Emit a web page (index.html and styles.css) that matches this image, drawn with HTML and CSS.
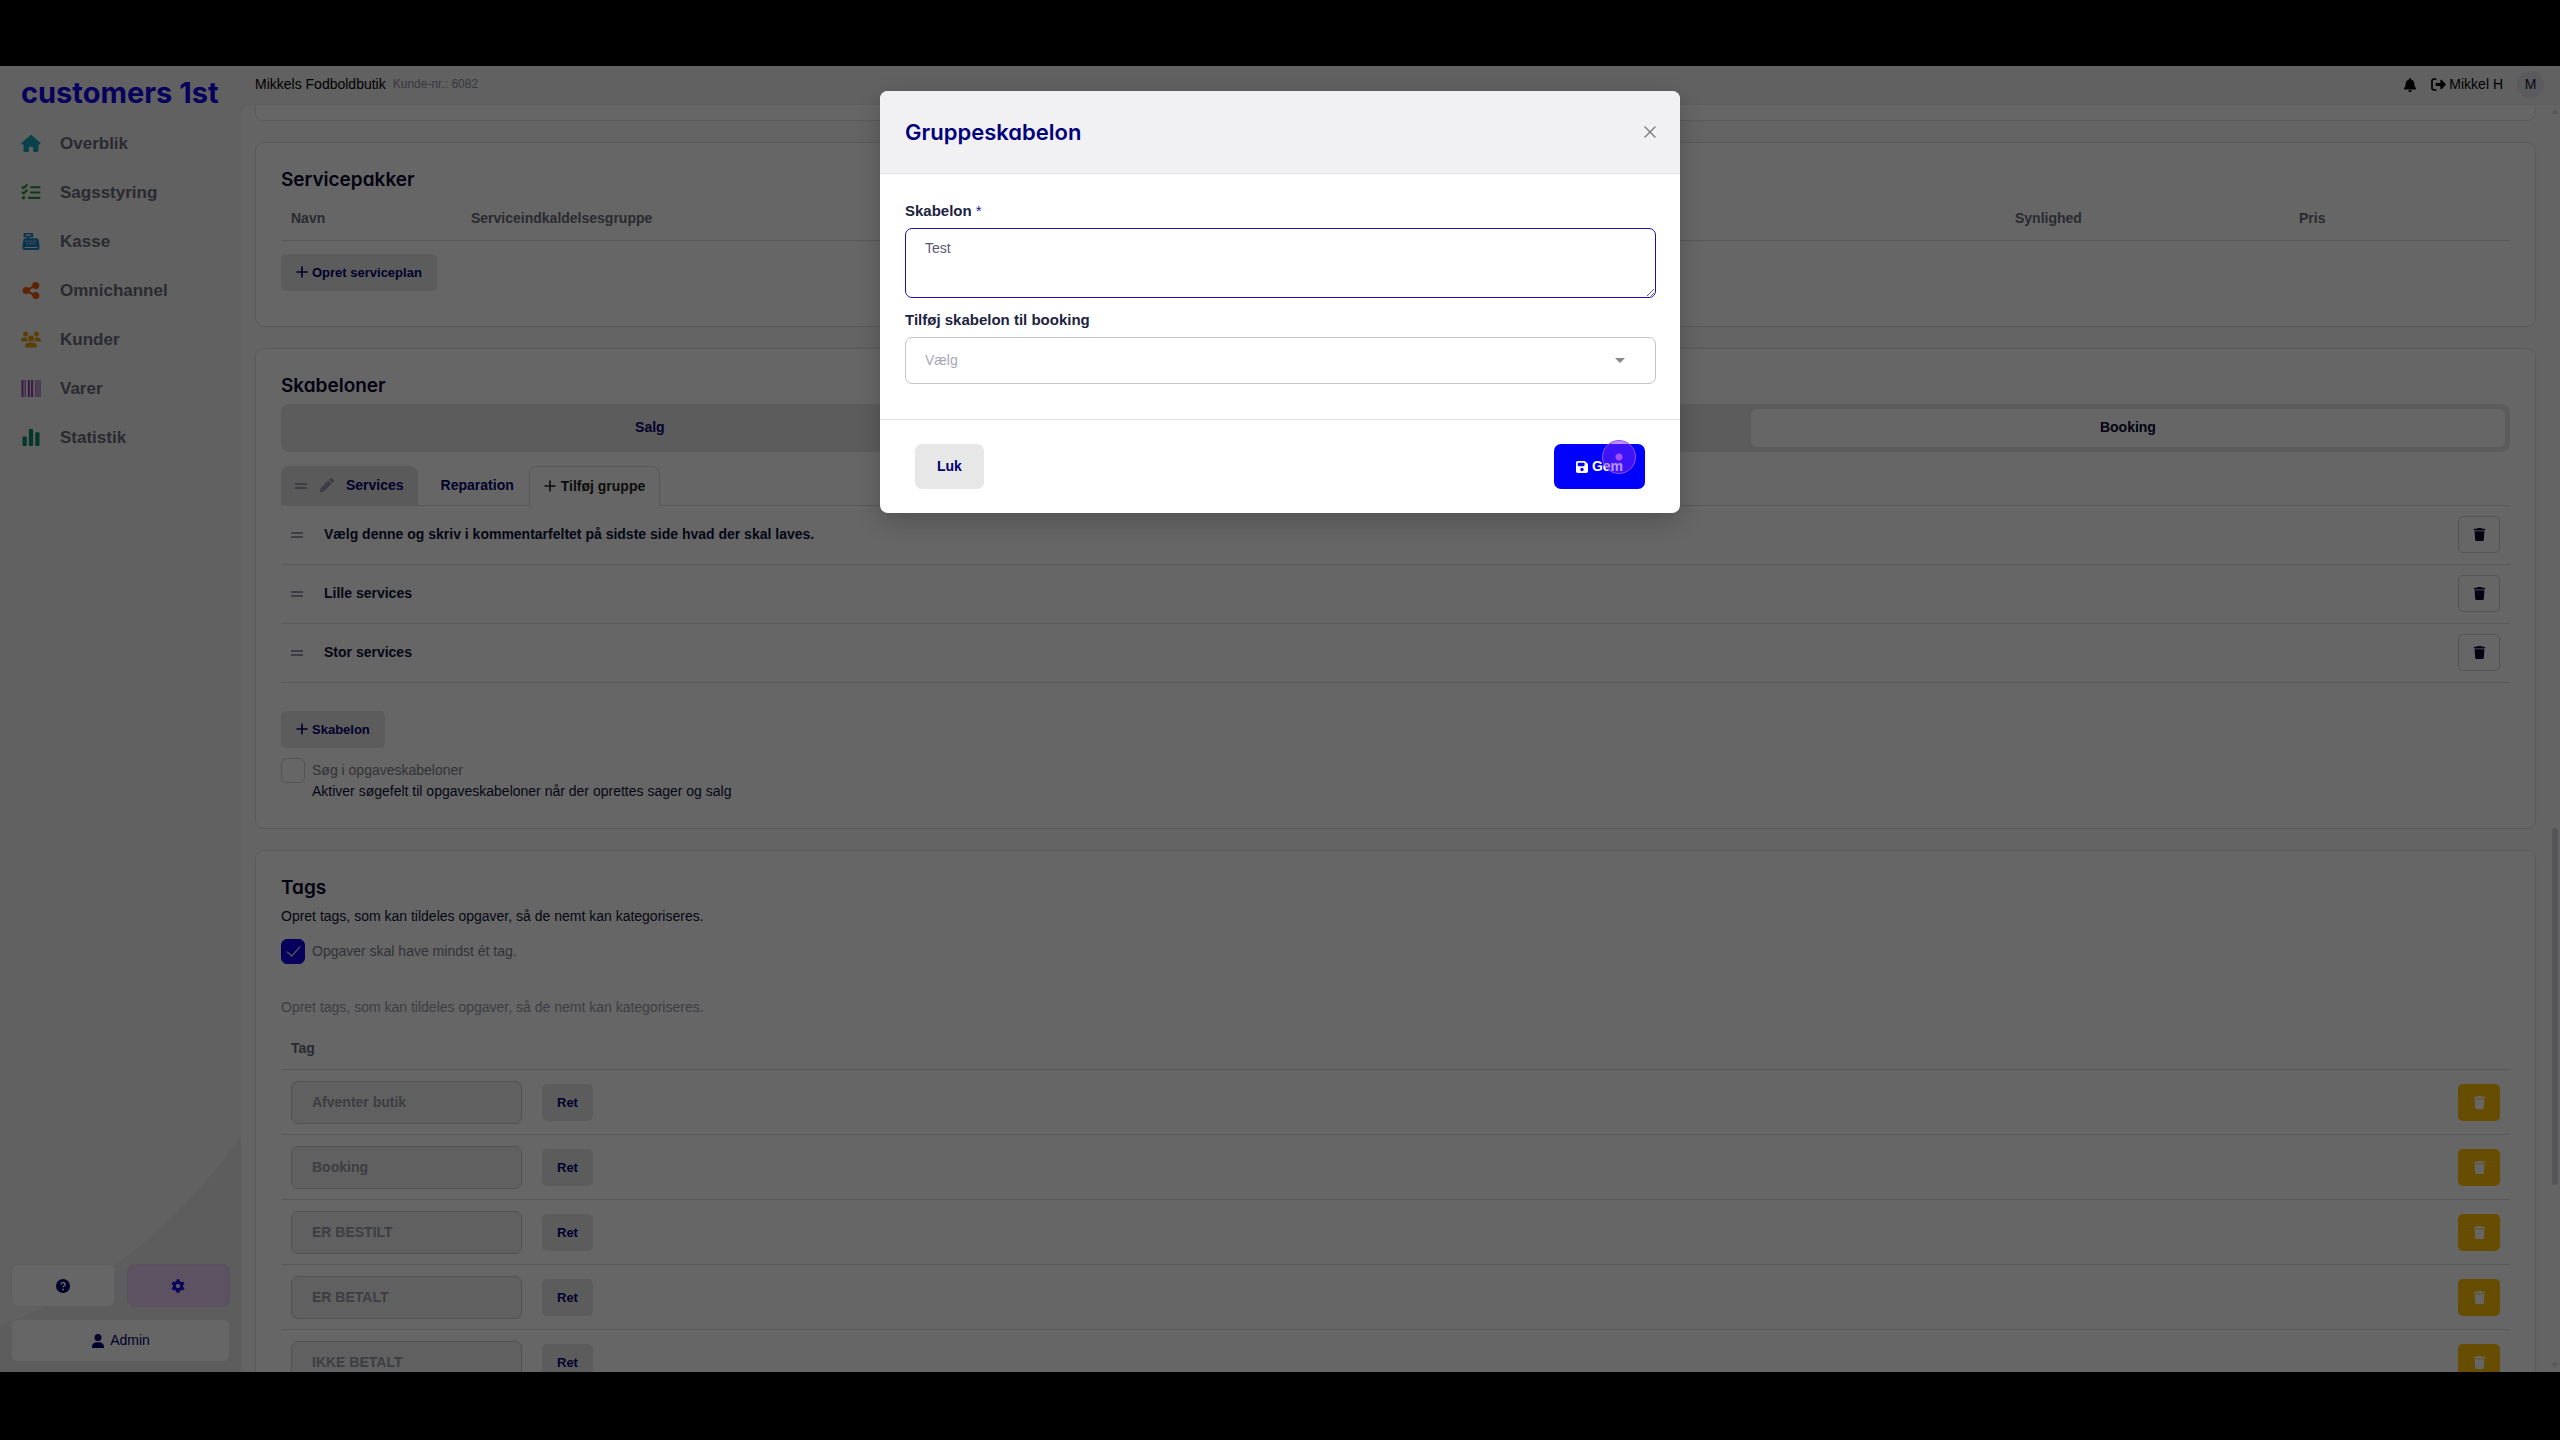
FILE: index.html
```html
<!DOCTYPE html>
<html lang="da">
<head>
    <meta charset="UTF-8">
    <meta name="viewport" content="width=device-width, initial-scale=1.0">
    <title>Customers 1st - Skabeloner</title>
    <link rel="stylesheet" href="styles.css">
</head>
<body>
    <svg class="sprite" aria-hidden="true">
        <symbol id="i-home" viewBox="0 0 576 512"><path d="M575.8 255.5c0 18-15 32.1-32 32.1h-32l.7 160.2c0 2.7-.2 5.4-.5 8.1V472c0 22.1-17.9 40-40 40H392c-22.1 0-40-17.9-40-40v-88c0-17.7-14.3-32-32-32h-64c-17.7 0-32 14.3-32 32v88c0 22.1-17.9 40-40 40h-80c-22.1 0-40-17.9-40-40V287.600H32c-18 0-32-14-32-32.100c0-9 3-17 10-24L266.400 8c7-7 15-8 22-8s15 2 21 7L564.800 231.500c8 7 12 15 11 24z"/></symbol>
        <symbol id="i-list" viewBox="0 0 18 16"><g fill="none" stroke="currentColor" stroke-width="2" stroke-linecap="round" stroke-linejoin="round"><path d="M1 3l1 1 3-3M1 8l1 1 3-3M9 3h8M9 8h8M7 13h10"/></g><circle cx="2" cy="13" r="1.600"/></symbol>
        <symbol id="i-kasse" viewBox="0 0 512 512"><path fill-rule="evenodd" d="M64 0C46 0 32 14 32 32v64c0 18 14 32 32 32h80v32H87c-32 0-59 23-63 55L2 364c-1 7-2 13-2 20v64c0 35 29 64 64 64h384c35 0 64-29 64-64v-64c0-7-1-13-2-20l-22-149c-4-32-31-55-63-55H208v-32h80c18 0 32-14 32-32V32c0-18-14-32-32-32H64zm32 48h160v32H96V48zm-32 376h384v28H64v-28zM88 224h40v36H88zm88 0h40v36h-40zm88 0h40v36h-40zm88 0h40v36h-40zM132 304h40v36h-40zm94 0h40v36h-40zm94 0h40v36h-40z"/></symbol>
        <symbol id="i-share" viewBox="0 0 16 16"><path d="M4 8l8-5M4 8l8 5" stroke="currentColor" stroke-width="2"/><circle cx="3.500" cy="8" r="3.300"/><circle cx="12.500" cy="3.300" r="3.300"/><circle cx="12.500" cy="12.700" r="3.300"/></symbol>
        <symbol id="i-users" viewBox="0 0 640 512"><circle cx="144" cy="80" r="80"/><circle cx="496" cy="80" r="80"/><circle cx="320" cy="224" r="96"/><path d="M0 299c0-59 48-107 107-107h42c16 0 31 4 45 10-9 53 10 90 43 118H21c-12 0-21-9-21-21zM403 320c33-28 52-65 43-118 14-6 29-10 45-10h42c59 0 107 48 107 107 0 12-9 21-21 21zM128 485c0-73 60-133 133-133h118c73 0 133 60 133 133 0 15-12 27-27 27H155c-15 0-27-12-27-27z"/></symbol>
        <symbol id="i-barcode" viewBox="0 0 18 16"><path d="M0 0h2v16H0zM3 0h1v16H3zM6 0h2v16H6zM9 0h2v16H9zM13 0h1v16h-1zM15 0h1v16h-1zM17 0h1v16h-1z"/></symbol>
        <symbol id="i-chart" viewBox="0 0 16 16"><rect x="0" y="7" width="4" height="9" rx="1"/><rect x="6" y="0" width="4" height="16" rx="1"/><rect x="12" y="3" width="4" height="13" rx="1"/></symbol>
        <symbol id="i-help" viewBox="0 0 16 16"><circle cx="8" cy="8" r="8"/><path d="M5.800 6.200c0-3 4.600-2.800 4.600 0 0 1.500-2.300 1.600-2.300 3.300" fill="none" stroke="#fff" stroke-width="1.700"/><circle cx="8" cy="12" r="1.100" fill="#fff"/></symbol>
        <symbol id="i-gear" viewBox="0 0 16 16"><g fill="none" stroke="currentColor"><circle cx="8" cy="8" r="4.200" stroke-width="3.400"/><path d="M8 .4v3M8 12.600v3M1.400 4.200L4 5.700M12 10.300l2.600 1.500M1.400 11.800L4 10.300M12 5.700l2.600-1.500" stroke-width="3.400"/></g></symbol>
        <symbol id="i-user" viewBox="0 0 448 512"><path d="M224 256A128 128 0 1 0 224 0a128 128 0 1 0 0 256zm-45.700 48C79.800 304 0 383.800 0 482.300 0 498.700 13.300 512 29.700 512h388.600c16.400 0 29.700-13.300 29.700-29.700C448 383.800 368.200 304 269.700 304h-91.400z"/></symbol>
        <symbol id="i-bell" viewBox="0 0 448 512"><path d="M224 0c-17.700 0-32 14.300-32 32v19.200C119 66 64 130.600 64 208v18.800c0 47-17.300 92.400-48.500 127.600l-7.400 8.300c-8.400 9.400-10.400 22.900-5.300 34.400S19.400 416 32 416h384c12.600 0 24-7.400 29.200-18.900s3.100-25-5.300-34.400l-7.400-8.300C401.300 319.200 384 273.900 384 226.800V208c0-77.400-55-142-128-156.800V32c0-17.700-14.300-32-32-32zm45.300 493.300c12-12 18.700-28.300 18.700-45.300H160c0 17 6.700 33.300 18.700 45.300s28.300 18.700 45.300 18.700 33.300-6.700 45.300-18.700z"/></symbol>
        <symbol id="i-logout" viewBox="0 0 16 14"><path d="M5 1.200H3a2 2 0 0 0-2 2v7.600a2 2 0 0 0 2 2h2" fill="none" stroke="currentColor" stroke-width="1.800" stroke-linecap="round"/><path d="M5 5.500h5V2.600c0-.8.700-1 1.200-.6L15.600 6.400c.4.400.4.800 0 1.200L11.200 12c-.5.400-1.200.2-1.200-.6V8.500H5z"/></symbol>
        <symbol id="i-plus" viewBox="0 0 12 12"><path d="M6 1v10M1 6h10" stroke="currentColor" stroke-width="1.600" stroke-linecap="round"/></symbol>
        <symbol id="i-grip" viewBox="0 0 12 8"><path d="M0 2h12M0 6h12" stroke="currentColor" stroke-width="2"/></symbol>
        <symbol id="i-pen" viewBox="0 0 16 16"><path d="M9.800 2.500l3.700 3.700-8.200 8.200-4.600 1.100 1-4.700zM10.800 1.500l1-1a1.700 1.700 0 0 1 2.400 0l1.300 1.300a1.700 1.700 0 0 1 0 2.400l-1 1z"/></symbol>
        <symbol id="i-trash" viewBox="0 0 448 512"><path d="M135.200 17.700L128 32H32C14.300 32 0 46.300 0 64s14.300 32 32 32h384c17.700 0 32-14.300 32-32s-14.300-32-32-32h-96l-7.200-14.300C307.400 6.800 296.300 0 284.200 0H163.800c-12.100 0-23.200 6.800-28.600 17.700zM416 128H32l21.200 339c1.600 25.300 22.600 45 47.900 45h245.800c25.300 0 46.300-19.700 47.900-45L416 128z"/></symbol>
        <symbol id="i-save" viewBox="0 32 448 448"><path fill-rule="evenodd" d="M64 32C28.700 32 0 60.700 0 96v320c0 35.300 28.700 64 64 64h320c35.300 0 64-28.700 64-64V173.300c0-17-6.700-33.300-18.700-45.300L352 50.700C340 38.700 323.700 32 306.700 32H64zm0 96c0-17.700 14.300-32 32-32h192c17.700 0 32 14.300 32 32v64c0 17.700-14.300 32-32 32H96c-17.700 0-32-14.300-32-32v-64zM224 288a64 64 0 1 1 0 128 64 64 0 1 1 0-128z"/></symbol>
        <symbol id="i-close" viewBox="0 0 12 12"><path d="M1 1l10 10M11 1L1 11" stroke="currentColor" stroke-width="1.300" stroke-linecap="round"/></symbol>
    </svg>

    <div class="app">
        <aside class="sidebar">
            <svg class="sidebar-curve" viewBox="0 0 240 240" preserveAspectRatio="none" aria-hidden="true"><path d="M240 0C170 100 90 160 0 192V240H240Z"/></svg>
            <a class="logo" href="#">customers 1st</a>
            <nav class="menu">
                <a href="#"><svg class="icon home"><use href="#i-home"/></svg>Overblik</a>
                <a href="#"><svg class="icon cases"><use href="#i-list"/></svg>Sagsstyring</a>
                <a href="#"><svg class="icon register"><use href="#i-kasse"/></svg>Kasse</a>
                <a href="#"><svg class="icon omni"><use href="#i-share"/></svg>Omnichannel</a>
                <a href="#"><svg class="icon people"><use href="#i-users"/></svg>Kunder</a>
                <a href="#"><svg class="icon goods"><use href="#i-barcode"/></svg>Varer</a>
                <a href="#"><svg class="icon stats"><use href="#i-chart"/></svg>Statistik</a>
            </nav>
            <div class="sidebar-bottom">
                <button class="side-btn" aria-label="Hjælp"><svg><use href="#i-help"/></svg></button>
                <button class="side-btn active" aria-label="Indstillinger"><svg><use href="#i-gear"/></svg></button>
                <button class="side-btn wide"><svg><use href="#i-user"/></svg>Admin</button>
            </div>
        </aside>

        <div class="page">
            <header class="topbar">
                <span class="shop">Mikkels Fodboldbutik</span>
                <span class="customer-no">Kunde-nr.: 6082</span>
                <div class="topbar-right">
                    <svg class="bell"><use href="#i-bell"/></svg>
                    <a href="#" class="user-link"><svg><use href="#i-logout"/></svg>Mikkel H</a>
                    <span class="avatar">M</span>
                </div>
            </header>

            <main class="content">
                <section class="card card-end"></section>

                <section class="card">
                    <h2>Servicepakker</h2>
                    <table class="plans">
                        <thead>
                            <tr><th class="col-name">Navn</th><th>Serviceindkaldelsesgruppe</th><th class="col-visible">Synlighed</th><th class="col-price">Pris</th></tr>
                        </thead>
                    </table>
                    <button class="btn new-plan"><svg><use href="#i-plus"/></svg>Opret serviceplan</button>
                </section>

                <section class="card">
                    <h2>Skabeloner</h2>
                    <div class="switch">
                        <button>Salg</button>
                        <button>Sager</button>
                        <button class="active">Booking</button>
                    </div>
                    <div class="tabs">
                        <button class="tab selected"><svg class="grip"><use href="#i-grip"/></svg><svg class="pen"><use href="#i-pen"/></svg>Services</button>
                        <button class="tab">Reparation</button>
                        <button class="tab add"><svg><use href="#i-plus"/></svg>Tilføj gruppe</button>
                    </div>
                    <ul class="templates">
                        <li><svg class="grip"><use href="#i-grip"/></svg><span>Vælg denne og skriv i kommentarfeltet på sidste side hvad der skal laves.</span><button class="delete" aria-label="Slet"><svg><use href="#i-trash"/></svg></button></li>
                        <li><svg class="grip"><use href="#i-grip"/></svg><span>Lille services</span><button class="delete" aria-label="Slet"><svg><use href="#i-trash"/></svg></button></li>
                        <li><svg class="grip"><use href="#i-grip"/></svg><span>Stor services</span><button class="delete" aria-label="Slet"><svg><use href="#i-trash"/></svg></button></li>
                    </ul>
                    <button class="btn new-template"><svg><use href="#i-plus"/></svg>Skabelon</button>
                    <div class="check">
                        <input type="checkbox" id="searchTemplates">
                        <div>
                            <label for="searchTemplates">Søg i opgaveskabeloner</label>
                            <p>Aktiver søgefelt til opgaveskabeloner når der oprettes sager og salg</p>
                        </div>
                    </div>
                </section>

                <section class="card">
                    <h2>Tags</h2>
                    <p>Opret tags, som kan tildeles opgaver, så de nemt kan kategoriseres.</p>
                    <div class="check tag-check">
                        <input type="checkbox" id="requireTag" checked>
                        <label for="requireTag">Opgaver skal have mindst ét tag.</label>
                    </div>
                    <p class="hint">Opret tags, som kan tildeles opgaver, så de nemt kan kategoriseres.</p>
                    <table class="tags">
                        <thead>
                            <tr><th class="col-tag">Tag</th><th></th><th></th></tr>
                        </thead>
                        <tbody>
                            <tr><td><input type="text" value="Afventer butik" aria-label="Tag" disabled></td><td><button class="btn">Ret</button></td><td class="last"><button class="delete warn" aria-label="Slet"><svg><use href="#i-trash"/></svg></button></td></tr>
                            <tr><td><input type="text" value="Booking" aria-label="Tag" disabled></td><td><button class="btn">Ret</button></td><td class="last"><button class="delete warn" aria-label="Slet"><svg><use href="#i-trash"/></svg></button></td></tr>
                            <tr><td><input type="text" value="ER BESTILT" aria-label="Tag" disabled></td><td><button class="btn">Ret</button></td><td class="last"><button class="delete warn" aria-label="Slet"><svg><use href="#i-trash"/></svg></button></td></tr>
                            <tr><td><input type="text" value="ER BETALT" aria-label="Tag" disabled></td><td><button class="btn">Ret</button></td><td class="last"><button class="delete warn" aria-label="Slet"><svg><use href="#i-trash"/></svg></button></td></tr>
                            <tr><td><input type="text" value="IKKE BETALT" aria-label="Tag" disabled></td><td><button class="btn">Ret</button></td><td class="last"><button class="delete warn" aria-label="Slet"><svg><use href="#i-trash"/></svg></button></td></tr>
                        </tbody>
                    </table>
                </section>

                <div class="scrollbar" aria-hidden="true">
                    <svg viewBox="0 0 6 5"><path d="M3 0l3 5H0z"/></svg>
                    <div class="track"><div class="thumb"></div></div>
                    <svg viewBox="0 0 6 5"><path d="M3 5l3-5H0z"/></svg>
                </div>
            </main>
        </div>

        <div class="overlay">
            <form class="modal" role="dialog" aria-labelledby="modalTitle">
                <div class="modal-header">
                    <h1 id="modalTitle">Gruppeskabelon</h1>
                    <button type="button" class="close" aria-label="Luk vindue"><svg><use href="#i-close"/></svg></button>
                </div>
                <div class="modal-body">
                    <label for="template">Skabelon <span class="required">*</span></label>
                    <textarea id="template">Test</textarea>
                    <label for="bookingTemplate">Tilføj skabelon til booking</label>
                    <div class="select-wrap">
                        <select id="bookingTemplate">
                            <option>Vælg</option>
                        </select>
                        <svg viewBox="0 0 10 5" aria-hidden="true"><path d="M0 0h10L5 5z"/></svg>
                    </div>
                </div>
                <div class="modal-footer">
                    <button type="button" class="btn big">Luk</button>
                    <button type="button" class="btn big primary"><svg><use href="#i-save"/></svg>Gem<span class="click-mark"></span></button>
                </div>
            </form>
        </div>
    </div>
</body>
</html>
```

FILE: styles.css
```css
* {
    box-sizing: border-box;
}

body {
    margin: 0;
    height: 100vh;
    padding: 66px 0 68px;
    background: #000;
    color: #0c1236;
    font: 14px/21px "Liberation Sans", Arial, sans-serif;
}

h1, h2, p, ul {
    margin: 0;
    padding: 0;
}

a {
    color: inherit;
    text-decoration: none;
}

button, input, textarea, select {
    font: inherit;
    margin: 0;
}

button {
    display: inline-flex;
    align-items: center;
    justify-content: center;
    padding: 0;
    border: none;
    background: none;
    color: #00006e;
    font-weight: bold;
    cursor: pointer;
}

svg {
    fill: currentColor;
    flex: none;
}

.sprite {
    position: absolute;
    width: 0;
    height: 0;
}

.app {
    position: relative;
    display: flex;
    height: 100%;
    overflow: hidden;
    background: #f2f2f3;
}

/* Sidebar */
.sidebar {
    position: relative;
    display: flex;
    flex-direction: column;
    width: 241px;
    padding: 9px 11px 10px;
}

.sidebar-curve {
    position: absolute;
    left: 0;
    bottom: 0;
    width: 100%;
    height: 236px;
    color: #e9e9ea;
}

.logo {
    padding-left: 10px;
    color: #0f00e6;
    font: bold 29px/36px Inter, sans-serif;
}

.menu {
    display: flex;
    flex-direction: column;
    margin-top: 8px;
    padding-left: 10px;
}

.menu a {
    display: flex;
    align-items: center;
    gap: 19px;
    height: 49px;
    color: #6a6a7c;
    font-size: 17px;
    font-weight: bold;
}

.icon {
    width: 20px;
    height: 17px;
}

.home { color: #17a2b8; }
.cases { color: #2f8f3a; }
.register { color: #1c84c6; }
.omni { color: #e8590c; }
.people { color: #e0a010; }
.goods { color: #8e44ad; }
.stats { color: #0a8a6c; }

.sidebar-bottom {
    position: relative;
    display: grid;
    grid-template-columns: 1fr 1fr;
    gap: 12px;
    margin-top: auto;
}

.side-btn {
    height: 43px;
    gap: 5px;
    border: 1px solid #ececee;
    border-radius: 7px;
    background: #fff;
    font-weight: normal;
}

.side-btn svg {
    width: 14px;
    height: 14px;
}

.side-btn.active {
    background: #e8cdf2;
    border-color: #e2cbec;
    color: #0f00e6;
}

.side-btn.wide {
    grid-column: span 2;
}

/* Top bar */
.page {
    display: flex;
    flex-direction: column;
    flex: 1;
    min-width: 0;
}

.topbar {
    display: flex;
    align-items: center;
    gap: 7px;
    height: 38px;
    padding: 0 16px 1px 14px;
    color: #000;
}

.customer-no {
    color: #8c8c9e;
    font-size: 12px;
}

.topbar-right {
    display: flex;
    align-items: center;
    gap: 14px;
    margin-left: auto;
}

.bell {
    width: 14px;
    height: 14px;
}

.user-link {
    display: flex;
    align-items: center;
    gap: 3px;
}

.user-link svg {
    width: 15px;
    height: 13px;
}

.avatar {
    width: 27px;
    height: 27px;
    border-radius: 50%;
    background: #e0e1ee;
    color: #14142c;
    line-height: 27px;
    text-align: center;
}

/* Content */
.content {
    position: relative;
    display: flex;
    flex-direction: column;
    gap: 21px;
    flex: 1;
    min-height: 0;
    padding: 0 24px 0 14px;
    overflow: hidden;
    border-top: 1px solid #eeeeef;
    border-top-left-radius: 10px;
    background: #fafafa;
}

.card {
    flex: none;
    padding: 22px 25px 26px;
    border: 1px solid #e0e0e4;
    border-radius: 9px;
    background: #fff;
    box-shadow: 0 0 16px rgba(0, 0, 0, 0.02);
}

.card-end {
    height: 16px;
    padding: 0;
    border-top: none;
    border-radius: 0 0 9px 9px;
}

h2 {
    margin-bottom: 3px;
    color: #06062e;
    font: 600 19px/30px Inter, sans-serif;
    font-feature-settings: "cv11";
}

table {
    width: 100%;
    border-collapse: collapse;
    table-layout: fixed;
}

th {
    height: 42px;
    padding: 0 10px;
    border-bottom: 1px solid #dcdce0;
    color: #6a6a7c;
    text-align: left;
}

.col-name { width: 180px; }
.col-visible { width: 284px; }
.col-price { width: 221px; }

.btn {
    height: 37px;
    padding: 0 15px;
    gap: 4px;
    border-radius: 5px;
    background: #e7e7e8;
    font-size: 13px;
}

.btn svg, .tab.add svg {
    width: 12px;
    height: 12px;
}

.new-plan {
    margin: 13px 0 9px;
}

.switch {
    display: flex;
    height: 48px;
    padding: 5px;
    border-radius: 8px;
    background: #e7e7e8;
}

.switch button {
    flex: 1 1 auto;
    border-radius: 6px;
}

.switch .active {
    background: #fff;
    color: #06062e;
}

.tabs {
    display: flex;
    height: 40px;
    margin-top: 14px;
    border-bottom: 1px solid #dcdce0;
}

.tab {
    height: 40px;
    padding: 0 15px;
    border-radius: 8px 8px 0 0;
}

.tab + .tab {
    padding: 0 15px 0 23px;
}

.tab.selected {
    gap: 12px;
    padding: 0 14px;
    background: #e2e2e4;
}

.tab .pen {
    width: 15px;
    height: 15px;
    color: #9a9aae;
}

.grip {
    width: 12px;
    height: 8px;
    color: #9a9aae;
}

.tabs .tab.add {
    padding: 0 14px;
    gap: 5px;
    border: 1px solid #dcdce0;
    border-bottom: none;
    background: #fff;
    color: #222;
}

.templates {
    list-style: none;
}

.templates li {
    display: flex;
    align-items: center;
    gap: 21px;
    height: 59px;
    padding: 0 10px;
    border-bottom: 1px solid #e2e2e5;
    font-weight: bold;
}

.delete {
    width: 42px;
    height: 37px;
    border: 1px solid #cfcfd4;
    border-radius: 5px;
    color: #06062e;
}

.delete svg {
    width: 13px;
    height: 13px;
}

.templates .delete {
    margin-left: auto;
}

.delete.warn {
    border: none;
    background: #ffc107;
    color: #fff;
}

.new-template {
    margin: 28px 0 10px;
}

.check {
    display: flex;
    gap: 7px;
}

.check label {
    display: block;
    padding-top: 2px;
    color: #7c7e8c;
}

.check input {
    appearance: none;
    width: 24px;
    height: 25px;
    border: 1px solid #cfcfd4;
    border-radius: 6px;
    background: #fff;
}

.check input:checked {
    display: grid;
    place-items: center;
    border-color: #0f00e6;
    background: #0f00e6;
}

.check input:checked::before {
    content: "";
    width: 6px;
    height: 12px;
    margin-bottom: 4px;
    border: solid #fff;
    border-width: 0 1px 1px 0;
    rotate: 42deg;
}

.tag-check {
    margin: 12px 0 33px;
}

.hint {
    color: #9a9aa8;
}

.tags {
    margin-top: 10px;
}

.tags td {
    height: 65px;
    padding: 0 10px;
    border-bottom: 1px solid #dcdce0;
}

.col-tag { width: 251px; }

.tags .last {
    text-align: right;
}

.tags button {
    vertical-align: middle;
}

.tags input {
    width: 100%;
    height: 43px;
    padding: 0 20px;
    border: 1px solid #cacacf;
    border-radius: 7px;
    background: #f0f0f1;
    color: #9a9aa8;
    font-weight: bold;
    vertical-align: middle;
}

.scrollbar {
    position: absolute;
    top: 0;
    right: 2px;
    bottom: 0;
    display: flex;
    flex-direction: column;
    width: 6px;
    padding: 4px 0;
    color: #dcdce0;
}

.track {
    display: flex;
    flex-direction: column;
    flex: 1;
    justify-content: flex-end;
    padding-bottom: 178px;
}

.thumb {
    height: 29%;
    min-height: 357px;
    border-radius: 3px;
    background: #d4d4de;
}

/* Modal */
.overlay {
    position: absolute;
    inset: 0;
    display: flex;
    align-items: flex-start;
    justify-content: center;
    padding-top: 25px;
    background: rgba(0, 0, 0, 0.6);
}

.modal {
    width: 800px;
    border-radius: 8px;
    background: #fff;
    box-shadow: 0 8px 24px rgba(0, 0, 0, 0.2);
}

.modal-header {
    display: flex;
    align-items: center;
    justify-content: space-between;
    height: 83px;
    padding: 0 24px 0 25px;
    border-bottom: 1px solid #e2e2e5;
    border-radius: 8px 8px 0 0;
    background: #f1f1f4;
}

h1 {
    color: #00007a;
    font: 600 22px/30px Inter, sans-serif;
    font-feature-settings: "cv11";
}

.close {
    color: #777;
}

.close svg {
    width: 12px;
    height: 12px;
}

.modal-body {
    display: flex;
    flex-direction: column;
    padding: 26px 24px 35px 25px;
    border-bottom: 1px solid #e2e2e5;
}

.modal-body label {
    margin-bottom: 7px;
    color: #1c2340;
    font-size: 15px;
    font-weight: bold;
}

.required {
    color: #1a1aa0;
    font-weight: normal;
}

textarea {
    height: 70px;
    margin-bottom: 11px;
    padding: 9px 19px;
    border: 1px solid #1c10b0;
    border-radius: 7px;
    outline: none;
    color: #5a5a78;
}

.select-wrap {
    position: relative;
}

select {
    appearance: none;
    width: 100%;
    height: 47px;
    padding: 0 19px;
    border: 1px solid #c4c4c6;
    border-radius: 7px;
    background: #fff;
    color: #a8a8b8;
}

.select-wrap svg {
    position: absolute;
    top: 21px;
    right: 31px;
    width: 10px;
    height: 5px;
    color: #888;
}

.modal-footer {
    display: flex;
    justify-content: space-between;
    padding: 24px 35px;
}

.btn.big {
    height: 45px;
    padding: 0 22px;
    border-radius: 7px;
    font-size: 14px;
}

.btn.primary {
    position: relative;
    background: #0000ff;
    color: #fff;
}

.click-mark {
    position: absolute;
    top: -4px;
    right: 9px;
    width: 34px;
    height: 34px;
    border: 1px solid #a04cf0;
    border-radius: 50%;
    background: radial-gradient(circle, #a64dff 3px, rgba(120, 40, 240, 0.5) 4px);
}
```
